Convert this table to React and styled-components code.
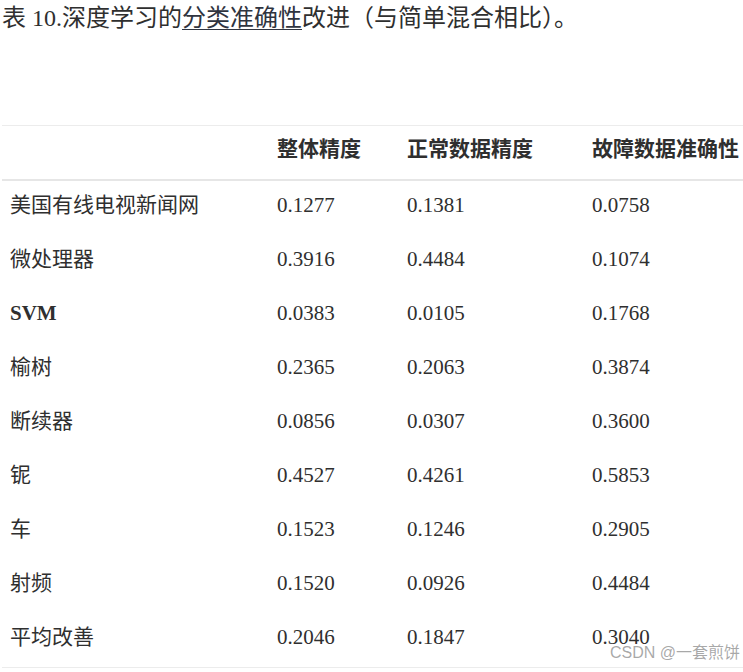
import React from "react";
import styled, { createGlobalStyle } from "styled-components";

const GlobalStyle = createGlobalStyle`
  html, body {
    margin: 0;
    padding: 0;
    background: #fff;
    overflow: hidden;
  }
  body {
    font-family: "Liberation Serif", "Noto Sans CJK SC", serif;
    color: #2f2f2f;
  }
`;

const rows = [
  ["美国有线电视新闻网", "0.1277", "0.1381", "0.0758"],
  ["微处理器", "0.3916", "0.4484", "0.1074"],
  ["SVM", "0.0383", "0.0105", "0.1768", true],
  ["榆树", "0.2365", "0.2063", "0.3874"],
  ["断续器", "0.0856", "0.0307", "0.3600"],
  ["铌", "0.4527", "0.4261", "0.5853"],
  ["车", "0.1523", "0.1246", "0.2905"],
  ["射频", "0.1520", "0.0926", "0.4484"],
  ["平均改善", "0.2046", "0.1847", "0.3040"],
];

const App = () => {
  return (
    <>
      <GlobalStyle />
      <Page>
        <Caption>
          表 10.深度学习的<CaptionLink>分类准确性</CaptionLink>
          改进（与简单混合相比）。
        </Caption>
        <Table>
          <colgroup>
            <col style={{ width: 267 }} />
            <col style={{ width: 130 }} />
            <col style={{ width: 185 }} />
            <col style={{ width: 170 }} />
          </colgroup>
          <thead>
            <tr>
              <HeadCell />
              <HeadCell>整体精度</HeadCell>
              <HeadCell>正常数据精度</HeadCell>
              <HeadCell>故障数据准确性</HeadCell>
            </tr>
          </thead>
          <tbody>
            {rows.map(([name, a, b, c, bold]) => (
              <tr key={name}>
                <Cell $bold={bold}>{name}</Cell>
                <Cell>{a}</Cell>
                <Cell>{b}</Cell>
                <Cell>{c}</Cell>
              </tr>
            ))}
          </tbody>
        </Table>
        <Watermark>CSDN @一套煎饼</Watermark>
      </Page>
    </>
  );
};

export default App;

const Page = styled.div`
  position: relative;
  width: 743px;
  height: 672px;
  padding-left: 2px;
  box-sizing: border-box;
`;

const Caption = styled.div`
  font-size: 24px;
  line-height: 36px;
  height: 36px;
  white-space: nowrap;
  margin-bottom: 89px;
`;

const CaptionLink = styled.span`
  color: #2f3440;
  text-decoration: underline;
  text-underline-offset: 3px;
  text-decoration-thickness: 1px;
`;

const Table = styled.table`
  border-collapse: collapse;
  table-layout: fixed;
  width: 752px;
  font-size: 21px;
  border-top: 1px solid #ececec;
  border-bottom: 1px solid #ececec;
`;

const HeadCell = styled.th`
  height: 47px;
  padding: 0 0 6px 8px;
  text-align: left;
  font-weight: 600;
  white-space: nowrap;
  border-bottom: 2px solid #e6e6e6;
  vertical-align: middle;
  line-height: 1;
`;

const Cell = styled.td`
  height: 48px;
  padding: 0 0 6px 8px;
  white-space: nowrap;
  vertical-align: middle;
  line-height: 1;
  font-weight: ${(p) => (p.$bold ? 700 : 400)};
`;

const Watermark = styled.div`
  position: absolute;
  right: 3px;
  bottom: 9px;
  font-family: "Liberation Sans", "Noto Sans CJK SC", sans-serif;
  font-size: 16px;
  color: rgba(140, 140, 140, 0.75);
  white-space: nowrap;
`;
